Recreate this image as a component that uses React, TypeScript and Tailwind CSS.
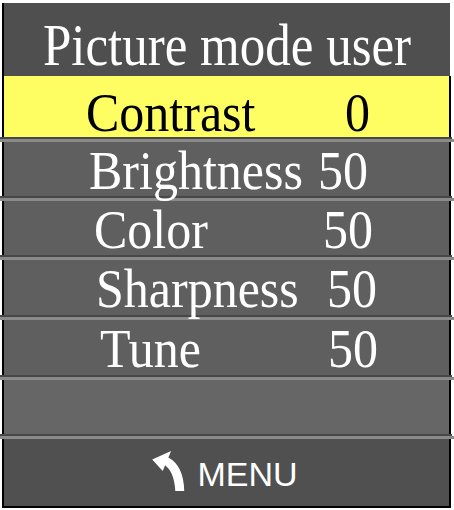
import React from "react";

const serif = { fontFamily: '"Liberation Serif", "Times New Roman", serif' };
const sans = { fontFamily: '"Liberation Sans", Arial, sans-serif' };

type Row = { label: string; value: string; pl: string; pr: string; h: string };

const rows: Row[] = [
  { label: "Brightness", value: "50", pl: "pl-[85px]", pr: "pr-[81px]", h: "h-[54px]" },
  { label: "Color", value: "50", pl: "pl-[90px]", pr: "pr-[76px]", h: "h-[54px]" },
  { label: "Sharpness", value: "50", pl: "pl-[92px]", pr: "pr-[72px]", h: "h-[55px]" },
  { label: "Tune", value: "50", pl: "pl-[96px]", pr: "pr-[71px]", h: "h-[55px]" },
];

function Light() {
  return <div className="h-[3px] w-[454px] bg-[#8a8a8a]" />;
}
function Dark() {
  return <div className="h-[2px] w-[452px] bg-[#474747]" />;
}

function MenuArrow() {
  return (
    <svg width="36" height="42" viewBox="0 0 34 40" className="block">
      <path d="M1 9 L19 1 L11 20 Z" fill="#ffffff" />
      <path d="M11 13 Q22 19 23 39 L31.5 39 Q31 15 16 7 Z" fill="#ffffff" />
    </svg>
  );
}

export default function App() {
  return (
    <div className="w-[454px] h-[510px] bg-white pt-[3px] flex flex-col overflow-hidden">
      {/* header */}
      <div
        className="ml-[2px] w-[448px] h-[73px] border-l-2 border-black bg-[#4f4f4f] text-white text-[51px] leading-[51px] pt-[20px] text-center"
        style={serif}
      >
        <span className="inline-block scale-y-[1.15] origin-[50%_84%]">Picture mode user</span>
      </div>

      {/* selected row */}
      <div
        className="ml-[2px] w-[449px] h-[61px] border-x-2 border-black bg-[#fefe62] text-black text-[50px] leading-[50px] pt-[13px] flex pl-[82px] pr-[79px]"
        style={serif}
      >
        <span className="inline-block scale-y-[1.1] origin-[50%_84%]">Contrast</span>
        <span className="ml-auto inline-block scale-y-[1.1] origin-[50%_84%]">0</span>
      </div>
      <Dark />

      {rows.map((r) => (
        <div key={r.label} className="flex flex-col">
          <Light />
          <div
            className={`ml-[2px] w-[449px] ${r.h} border-x-2 border-black bg-[#5f5f5f] text-white text-[50px] leading-[50px] pt-[5px] flex ${r.pl} ${r.pr}`}
            style={serif}
          >
            <span className="inline-block scale-y-[1.1] origin-[50%_84%]">{r.label}</span>
            <span className="ml-auto inline-block scale-y-[1.1] origin-[50%_84%]">{r.value}</span>
          </div>
          <Dark />
        </div>
      ))}

      {/* empty row */}
      <Light />
      <div className="ml-[2px] w-[449px] h-[54px] border-x-2 border-black bg-[#666666]" />
      <Dark />

      {/* footer */}
      <Light />
      <div className="ml-[2px] w-[449px] h-[69px] border-x-2 border-b-2 border-black bg-[#505050] flex items-center justify-center gap-[10px] pb-[4px] pr-[4px]">
        <MenuArrow />
        <span className="text-white text-[34px] leading-[34px] pt-[6px]" style={sans}>
          MENU
        </span>
      </div>
    </div>
  );
}
